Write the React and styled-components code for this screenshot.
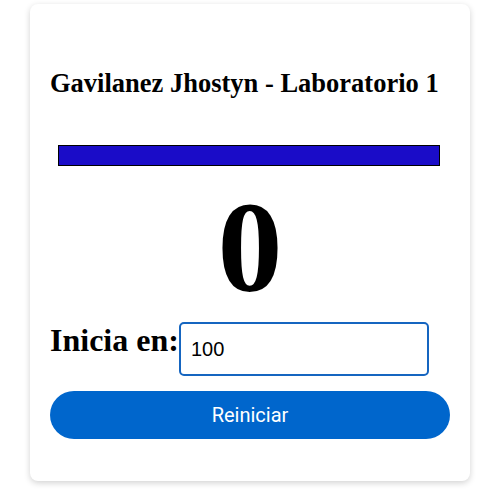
import React, { useState } from "react";
import styled, { createGlobalStyle } from "styled-components";

const GlobalStyle = createGlobalStyle`
  body {
    margin: 0;
    background: #ffffff;
    font-family: "Liberation Serif", "Times New Roman", serif;
  }
`;

const Page = styled.div`
  padding: 4px 21px 20px 30px;
`;

const Card = styled.div`
  width: 440px;
  box-sizing: border-box;
  padding: 20px 20px 42px;
  border-radius: 8px;
  background: #fff;
  box-shadow: 0 2px 6px rgba(0, 0, 0, 0.18);
  display: flex;
  flex-direction: column;
`;

const Title = styled.h2`
  margin: 44px 0 0;
  font-size: 26.5px;
  font-weight: 700;
  color: #000;
`;

const Bar = styled.div`
  margin: 46px 0 0 8px;
  width: 382px;
  height: 21px;
  box-sizing: border-box;
  background: #1a0cc8;
  border: 1px solid #000;
`;

const Counter = styled.div`
  margin-top: 6px;
  text-align: center;
  font-size: 130px;
  font-weight: 700;
  color: #000;
`;

const Row = styled.div`
  display: flex;
  align-items: flex-start;
`;

const Label = styled.label`
  font-size: 32px;
  font-weight: 700;
  color: #000;
`;

const Input = styled.input`
  width: 250px;
  height: 54px;
  box-sizing: border-box;
  border: 2px solid #1565c0;
  border-radius: 5px;
  padding: 0 10px;
  font-family: "Liberation Sans", Arial, sans-serif;
  font-size: 20px;
  color: #000;
  outline: none;
`;

const Button = styled.button`
  margin-top: 15px;
  height: 48px;
  border: none;
  border-radius: 24px;
  background: #0066cc;
  color: #fff;
  font-family: Roboto, "Liberation Sans", sans-serif;
  font-size: 20px;
  cursor: pointer;
`;

export default function App() {
  const [start, setStart] = useState("100");
  const [count, setCount] = useState(0);

  return (
    <>
      <GlobalStyle />
      <Page>
        <Card>
          <Title>Gavilanez Jhostyn - Laboratorio 1</Title>
          <Bar />
          <Counter>{count}</Counter>
          <Row>
            <Label htmlFor="inicio">Inicia en:</Label>
            <Input
              id="inicio"
              value={start}
              onChange={(e) => setStart(e.target.value)}
            />
          </Row>
          <Button onClick={() => setCount(0)}>Reiniciar</Button>
        </Card>
      </Page>
    </>
  );
}
